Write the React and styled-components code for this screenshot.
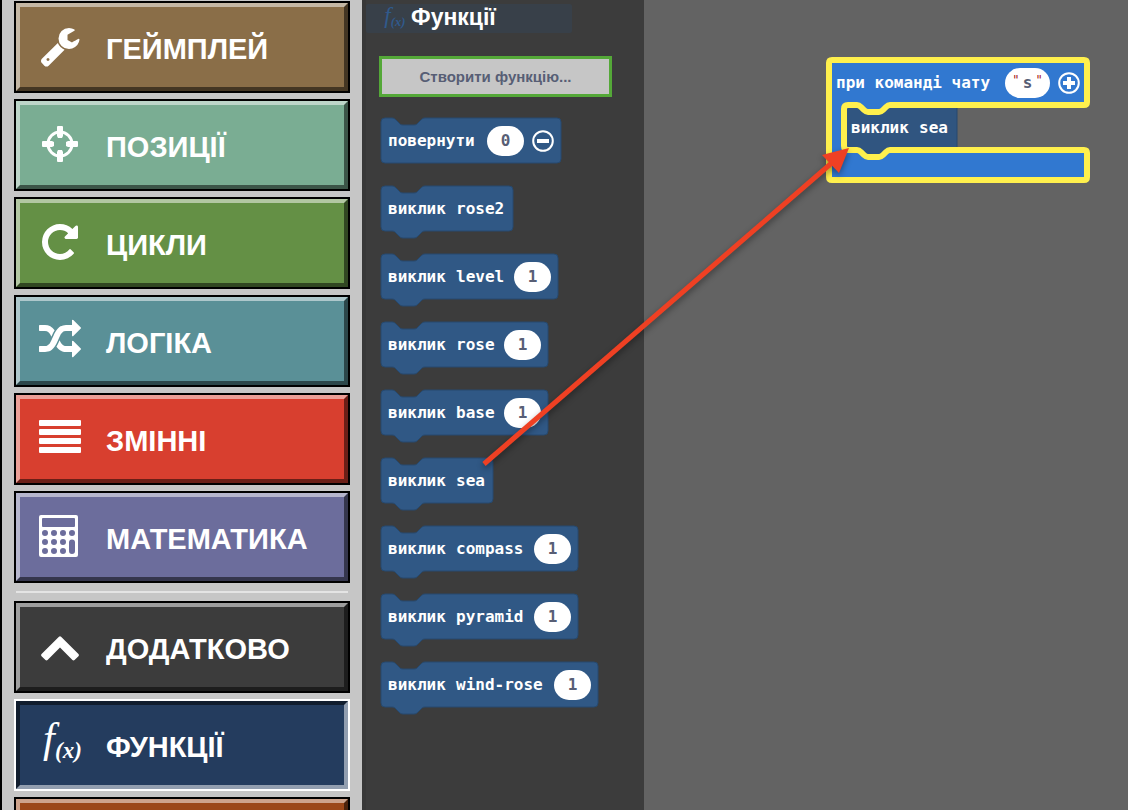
import React from "react";
import styled, { createGlobalStyle } from "styled-components";

const GlobalStyle = createGlobalStyle`
  * { box-sizing: border-box; }
  body { margin: 0; font-family: "Liberation Sans", Arial, sans-serif; }
  button, input { font: inherit; color: inherit; margin: 0; }
`;

const Editor = styled.div`
  position: relative;
  display: flex;
  height: 100vh;
  overflow: hidden;
  background: #636363;
`;

const Toolbox = styled.nav`
  flex: 0 0 362px;
  display: flex;
  flex-direction: column;
  gap: 6px;
  padding: 1px 12px;
  border-left: 2px solid #000;
  background: #c6c6c6;
  overflow: hidden;
`;

const CategoryButton = styled.button`
  flex: none;
  padding: 0;
  border: 2px solid ${(p) => (p.$selected ? "#fff" : "#000")};
  background: ${(p) => p.$color};
  color: #fff;
  text-align: left;
`;

const CategoryFace = styled.span`
  display: flex;
  align-items: flex-start;
  gap: 25px;
  height: 88px;
  padding: 18px 19px;
  border: 4px solid;
  border-color: ${(p) =>
    p.$selected
      ? "rgba(0,0,0,.5) rgba(255,255,255,.5) rgba(255,255,255,.5) rgba(0,0,0,.5)"
      : "rgba(255,255,255,.5) rgba(0,0,0,.5) rgba(0,0,0,.5) rgba(255,255,255,.5)"};
`;

const CategoryIcon = styled.svg`
  flex: none;
  width: 42px;
  height: 42px;
  fill: currentColor;
  overflow: visible;
`;

const CategoryName = styled.span`
  font-size: 29px;
  line-height: 48px;
  font-weight: 700;
  white-space: nowrap;
`;

const Divider = styled.hr`
  flex: none;
  width: 332px;
  height: 2px;
  margin: 2px 2px;
  border: 0;
  background: #e4e4e4;
`;

const Flyout = styled.section`
  flex: 0 0 282px;
  padding: 4px 4px 0;
  background: #3c3c3c;
  box-shadow: inset 4px 0 #383838;
`;

const FlyoutHeader = styled.header`
  display: flex;
  align-items: center;
  gap: 6px;
  width: 206px;
  height: 29px;
  padding-left: 16px;
  border-radius: 2px;
  background: #384049;
  color: #305a8c;
`;

const HeaderIcon = styled(CategoryIcon)`
  width: 23px;
  height: 23px;
`;

const FlyoutTitle = styled.h2`
  margin: 0;
  padding-bottom: 2px;
  font-size: 23px;
  line-height: 25px;
  color: #fff;
`;

const CreateButton = styled.button`
  display: block;
  width: 233px;
  height: 41px;
  margin: 23px 0 21px 13px;
  padding: 0;
  border: 3px solid #54a838;
  background: #c6c6c6;
  color: #575e75;
  font-size: 15px;
  font-weight: 700;
`;

const BlockList = styled.div`
  display: flex;
  flex-direction: column;
  gap: 23px;
  padding-left: 15px;
`;

const Block = styled.div`
  position: relative;
  width: ${(p) => p.$width}px;
  height: 45px;
`;

const BlockShape = styled.svg`
  position: absolute;
  left: 0;
  top: 0;
  overflow: visible;
`;

const BlockRow = styled.div`
  position: relative;
  display: flex;
  align-items: center;
  gap: 8px;
  height: 45px;
  padding: 0 7px;
  color: #fff;
  font-family: "DejaVu Sans Mono", monospace;
  font-size: 16px;
  line-height: 24px;
  font-weight: 700;
  white-space: nowrap;
`;

const Keyword = styled.span`
  min-width: 60px;
`;

const ValueField = styled.input`
  width: 37px;
  height: 30px;
  margin-left: auto;
  padding: 0;
  border: 0;
  border-radius: 15px;
  background: #fff;
  color: #575e75;
  text-align: center;
`;

const RoundButton = styled.button`
  display: flex;
  padding: 0;
  border: 0;
  background: none;
`;

const Workspace = styled.main`
  position: relative;
  flex: 1;
  min-width: 0;
`;

const EventBlock = styled.div`
  position: absolute;
  left: 185px;
  top: 60px;
  width: 258px;
  height: 120px;
`;

const NestedRow = styled(BlockRow)`
  margin-left: 15px;
`;

const TextField = styled.label`
  display: flex;
  justify-content: center;
  width: 45px;
  height: 30px;
  margin-left: auto;
  border-radius: 15px;
  background: #fff;
  color: #575e75;
`;

const Quote = styled.span`
  color: #a31515;
  font-size: 12px;
  font-weight: 400;
`;

const TextInput = styled.input`
  width: 16px;
  height: 30px;
  padding: 0;
  border: 0;
  background: none;
  text-align: center;
`;

const Arrow = styled.svg`
  position: absolute;
  left: 470px;
  top: 140px;
  pointer-events: none;
`;

const FunctionGlyph = () => (
  <>
    <text x="4" y="29" fontFamily="Liberation Serif, serif" fontStyle="italic" fontSize="42">f</text>
    <text x="16" y="35" fontFamily="Liberation Serif, serif" fontStyle="italic" fontWeight="700" fontSize="23">(x)</text>
  </>
);

const icons = {
  wrench: { box: 1792, art: <path d="M448 1472q0-26-19-45t-45-19-45 19-19 45 19 45 45 19 45-19 19-45zm644-420l-682 682q-37 37-90 37-52 0-91-37l-106-108q-38-36-38-90 0-53 38-91l681-681q39 98 114.5 173.5t173.5 114.5zm634-435q0 39-23 106-47 134-164.5 217.5t-258.5 83.5q-185 0-316.5-131.5t-131.5-316.5 131.5-316.5 316.5-131.5q58 0 121.5 16.5t107.5 46.5q16 11 16 28t-16 28l-293 169v224l193 107q5-3 79-48.5t135.5-81 70.5-35.5q15 0 23.5 10t8.5 25z" /> },
  target: {
    box: 42,
    art: (
      <>
        <circle cx="21" cy="21" r="12" fill="none" stroke="currentColor" strokeWidth="3" />
        <path d="M18 4q0-1 1-1h4q1 0 1 1v9l-1 2h-4l-1-2zM18 38q0 1 1 1h4q1 0 1-1v-9l-1-2h-4l-1 2zM4 18q-1 0-1 1v4q0 1 1 1h9l2-1v-4l-2-1zM38 18q1 0 1 1v4q0 1-1 1h-9l-2-1v-4l2-1z" />
      </>
    ),
  },
  repeat: { box: 1792, art: <path d="M1664 256v448q0 26-19 45t-45 19h-448q-42 0-59-40-17-39 14-69l138-138q-148-137-349-137-104 0-198.5 40.5t-163.5 109.5-109.5 163.5-40.5 198.5 40.5 198.5 109.5 163.5 163.5 109.5 198.5 40.5q119 0 225-52t179-147q7-10 23-12 15 0 25 9l137 138q9 8 9.5 20.5t-7.5 22.5q-109 132-264 204.5t-327 72.5q-156 0-298-61t-245-164-164-245-61-298 61-298 164-245 245-164 298-61q147 0 284.5 55.5t244.5 156.5l130-129q29-31 70-14 39 17 39 59z" /> },
  random: { box: 1792, art: <path d="M666 481q-60 92-137 273-22-45-37-72.5t-40.5-63.5-51-56.5-63-35-81.5-14.5h-224q-14 0-23-9t-9-23v-192q0-14 9-23t23-9h224q250 0 410 225zm1126 799q0 14-9 23l-320 320q-9 9-23 9-13 0-22.5-9.5t-9.5-22.5v-192q-32 0-85 .5t-81 1-73-1-71-5-64-10.5-63-18.5-58-28.5-59-40-55-53.5-56-69.5q59-93 136-273 22 45 37 72.5t40.5 63.5 51 56.5 63 35 81.5 14.5h256v-192q0-14 9-23t23-9q12 0 24 10l319 319q9 9 9 23zm0-896q0 14-9 23l-320 320q-9 9-23 9-13 0-22.5-9.5t-9.5-22.5v-192h-256q-48 0-87 15t-69 45-51 61.5-45 77.5q-32 62-78 171-29 66-49.5 111t-54 105-64 100-74 83-90 68.5-106.5 42-128 16.5h-224q-14 0-23-9t-9-23v-192q0-14 9-23t23-9h224q48 0 87-15t69-45 51-61.5 45-77.5q32-62 78-171 29-66 49.5-111t54-105 64-100 74-83 90-68.5 106.5-42 128-16.5h256v-192q0-14 9-23t23-9q12 0 24 10l319 319q9 9 9 23z" /> },
  lines: {
    box: 42,
    art: [3, 12, 21, 30].map((y) => <rect key={y} x="0" y={y} width="42" height="6" rx="1" />),
  },
  calculator: {
    box: 42,
    art: (
      <path
        fillRule="evenodd"
        d={
          "M2 0H37q2 0 2 2V40q0 2-2 2H2q-2 0-2-2V2q0-2 2-2ZM4 3q-1 0-1 1v7q0 1 1 1h31q1 0 1-1V4q0-1-1-1ZM30 27.500a3 3 0 0 1 6 0v8.500a3 3 0 0 1-6 0Z" +
          [18, 27, 36]
            .flatMap((y) => [6, 15, 24, 33].filter((x) => x < 33 || y < 20).map((x) => `M${x - 3} ${y}a3 3 0 1 1 6 0a3 3 0 1 1-6 0Z`))
            .join("")
        }
      />
    ),
  },
  chevron: { box: 1792, art: <path d="M1683 1331l-166 165q-19 19-45 19t-45-19l-531-531-531 531q-19 19-45 19t-45-19l-166-165q-19-19-19-45.5t19-45.5l742-741q19-19 45-19t45 19l742 741q19 19 19 45.5t-19 45.5z" /> },
  fx: { box: 42, art: <FunctionGlyph /> },
};

const categories = [
  { name: "ГЕЙМПЛЕЙ", color: "#8a6e48", icon: "wrench" },
  { name: "ПОЗИЦІЇ", color: "#7aad93", icon: "target" },
  { name: "ЦИКЛИ", color: "#649045", icon: "repeat" },
  { name: "ЛОГІКА", color: "#5a9097", icon: "random" },
  { name: "ЗМІННІ", color: "#d83f2f", icon: "lines" },
  { name: "МАТЕМАТИКА", color: "#6c6d9c", icon: "calculator" },
];

const extraCategories = [
  { name: "ДОДАТКОВО", color: "#3c3c3c", icon: "chevron" },
  { name: "ФУНКЦІЇ", color: "#243c5e", icon: "fx", selected: true },
  { name: "", color: "#9b4719" },
];

const calls = [
  { name: "rose2", width: 132 },
  { name: "level", width: 177, value: 1 },
  { name: "rose", width: 167, value: 1 },
  { name: "base", width: 167, value: 1 },
  { name: "sea", width: 112 },
  { name: "compass", width: 197, value: 1 },
  { name: "pyramid", width: 197, value: 1 },
  { name: "wind-rose", width: 217, value: 1 },
];

const NOTCH = "c2 0 3 1 4 2l3 3c1 1 2 2 4 2h11c2 0 3-1 4-2l3-3c1-1 2-2 4-2";
const NOTCH_BACK = "c-2 0-3 1-4 2l-3 3c-1 1-2 2-4 2h-11c-2 0-3-1-4-2l-3-3c-1-1-2-2-4-2";

const blockPath = (w, tab) =>
  `M0 4q0-4 4-4h7${NOTCH}H${w - 4}q4 0 4 4V41q0 4-4 4H44${tab ? NOTCH_BACK : ""}H4q-4 0-4-4Z`;

function Category({ name, color, icon, selected }) {
  return (
    <CategoryButton $color={color} $selected={selected} aria-label={name || "Категорія"}>
      <CategoryFace $selected={selected}>
        {icon && <CategoryIcon viewBox={`0 0 ${icons[icon].box} ${icons[icon].box}`}>{icons[icon].art}</CategoryIcon>}
        <CategoryName>{name}</CategoryName>
      </CategoryFace>
    </CategoryButton>
  );
}

function PuzzleBlock({ width, tab = true, children }) {
  return (
    <Block $width={width}>
      <BlockShape width={width} height="53">
        <path d={blockPath(width, tab)} fill="#305885" stroke="#26496f" />
      </BlockShape>
      <BlockRow>{children}</BlockRow>
    </Block>
  );
}

function RoundIcon({ plus }) {
  return (
    <svg width="22" height="22" fill="none" stroke="#fff">
      <circle cx="11" cy="11" r="9.800" strokeWidth="2" />
      <path d={plus ? "M5 11h12M11 5v12" : "M5 11h12"} strokeWidth="4" />
    </svg>
  );
}

export default function App() {
  return (
    <Editor>
      <GlobalStyle />
      <Toolbox>
        {categories.map((c) => <Category key={c.name} {...c} />)}
        <Divider />
        {extraCategories.map((c) => <Category key={c.name} {...c} />)}
      </Toolbox>

      <Flyout>
        <FlyoutHeader>
          <HeaderIcon viewBox="0 0 42 42"><FunctionGlyph /></HeaderIcon>
          <FlyoutTitle>Функції</FlyoutTitle>
        </FlyoutHeader>
        <CreateButton>Створити функцію...</CreateButton>
        <BlockList>
          <PuzzleBlock width={180} tab={false}>
            <Keyword>повернути</Keyword>
            <ValueField aria-label="повернути" defaultValue="0" />
            <RoundButton aria-label="Прибрати"><RoundIcon /></RoundButton>
          </PuzzleBlock>
          {calls.map((c) => (
            <PuzzleBlock key={c.name} width={c.width}>
              <Keyword>виклик</Keyword>
              <span>{c.name}</span>
              {c.value && <ValueField aria-label={c.name} defaultValue={c.value} />}
            </PuzzleBlock>
          ))}
        </BlockList>
      </Flyout>

      <Workspace>
        <EventBlock>
          <BlockShape width="258" height="120">
            <path d="M0 0H258V45H15V90H258V120H0Z" fill="#3178d0" />
            <path d={`M15 45h13${NOTCH}H128V90H61${NOTCH_BACK}H15Z`} fill="#305580" stroke="#26496f" />
            <path d={`M28 90${NOTCH}Z`} fill="#305580" />
            <path d={`M28 45${NOTCH}Z`} fill="#3178d0" />
            <path
              d={`M3 0H255q3 0 3 3V42q0 3-3 3H61${NOTCH_BACK}H19q-4 0-4 4V86q0 4 4 4h9${NOTCH}H255q3 0 3 3V117q0 3-3 3H3q-3 0-3-3V3q0-3 3-3Z`}
              fill="none"
              stroke="#fff04d"
              strokeWidth="6"
              strokeLinejoin="round"
            />
          </BlockShape>
          <BlockRow>
            <span>при команді чату</span>
            <TextField>
              <Quote>"</Quote>
              <TextInput aria-label="команда чату" defaultValue="s" />
              <Quote>"</Quote>
            </TextField>
            <RoundButton aria-label="Додати"><RoundIcon plus /></RoundButton>
          </BlockRow>
          <NestedRow>
            <Keyword>виклик</Keyword>
            <span>sea</span>
          </NestedRow>
        </EventBlock>
      </Workspace>

      <Arrow width="390" height="340">
        <g style={{ filter: "drop-shadow(0 3px 3px rgba(0,0,0,.4))" }}>
          <path d="M14 324L364 21" stroke="#ef4023" strokeWidth="5" />
          <path d="M379 8L352 15L369 33Z" fill="#ef4023" />
        </g>
      </Arrow>
    </Editor>
  );
}
